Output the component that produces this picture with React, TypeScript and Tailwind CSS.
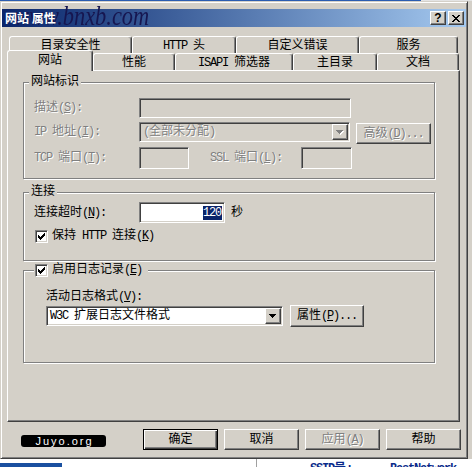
import React from "react";

const FONT = "font-['Liberation_Mono','Noto_Sans_CJK_SC',monospace] text-[12px] leading-[14px]";
const raised =
  "bg-[#d4d0c8] border border-t-white border-l-white border-r-[#404040] border-b-[#404040] shadow-[inset_-1px_-1px_0_#808080]";
const sunken =
  "border border-t-[#808080] border-l-[#808080] border-r-white border-b-white shadow-[inset_1px_1px_0_#404040,inset_-1px_-1px_0_#d4d0c8]";
const etched = "border border-[#808080] shadow-[inset_1px_1px_0_#fff,1px_1px_0_#fff]";
const dim = "text-[#808080] [text-shadow:1px_1px_0_#fff]";

// "&X" underlines X; latin runs get a half-width cell like the old bitmap font
function T({ s }: { s: string }) {
  const parts = s.split(/([\u3000-\u9fff\uff00-\uffef]+)/).filter(Boolean);
  return (
    <span className="whitespace-pre">
      {parts.map((p, i) => {
        if (/[\u3000-\u9fff\uff00-\uffef]/.test(p)) return <React.Fragment key={i}>{p}</React.Fragment>;
        const bits = p.split(/&(.)/);
        return (
          <span key={i} className="tracking-[-1.2px]">
            {bits.map((b, j) => (j % 2 ? <u key={j}>{b}</u> : b))}
          </span>
        );
      })}
    </span>
  );
}

const CHECK = ["......X", ".....XX", "X...XXX", "XX.XXX.", "XXXXX..", ".XXX...", "..X...."];

function Check() {
  return (
    <span className={`flex h-[13px] w-[13px] shrink-0 items-center justify-center bg-white ${sunken}`}>
      <svg width="7" height="7" viewBox="0 0 7 7" shapeRendering="crispEdges">
        {CHECK.map((row, y) =>
          row.split("").map((c, x) => (c === "X" ? <rect key={`${x}-${y}`} x={x} y={y} width="1" height="1" fill="#000" /> : null))
        )}
      </svg>
    </span>
  );
}

function Arrow({ disabled }: { disabled?: boolean }) {
  return (
    <span className={`flex h-[16px] w-[16px] shrink-0 items-center justify-center ${raised}`}>
      <svg width="8" height="5" viewBox="0 0 8 5" shapeRendering="crispEdges">
        {disabled && <path d="M1 1h7L4.5 5z" fill="#fff" />}
        <path d="M0 0h7L3.5 4z" fill={disabled ? "#808080" : "#000"} />
      </svg>
    </span>
  );
}

function Tab({ w, s, active }: { w: number; s: string; active?: boolean }) {
  return (
    <div
      style={{ width: w }}
      className={`flex items-start justify-center rounded-t-[3px] border-l border-t border-r border-l-white border-t-white border-r-[#404040] bg-[#d4d0c8] shadow-[inset_-1px_0_0_#808080] ${
        active ? "relative z-10 -mb-[1px] h-[21px] pt-[3px]" : "h-[17px] pt-[2px]"
      }`}
    >
      <T s={s} />
    </div>
  );
}

function Button({ s, w, h = 21, disabled, primary }: { s: string; w: number; h?: number; disabled?: boolean; primary?: boolean }) {
  return (
    <div
      style={{ width: w, height: h }}
      className={`flex shrink-0 items-center justify-center ${
        primary
          ? "border border-black bg-[#d4d0c8] shadow-[inset_1px_1px_0_#fff,inset_-1px_-1px_0_#404040,inset_-2px_-2px_0_#808080]"
          : raised
      } ${disabled ? dim : "text-black"}`}
    >
      <T s={s} />
    </div>
  );
}

export default function App() {
  return (
    <div className={`flex h-[467px] w-[472px] flex-col overflow-hidden bg-[#d4d0c8] ${FONT}`}>
      <div className="flex h-[1px]">
        <div className="w-[421px] bg-[#2a5cb0]" />
        <div className="flex-1 bg-[#e4e4e4]" />
      </div>

      {/* window */}
      <div className="flex h-[458px] w-[468px] flex-col border border-t-[#d4d0c8] border-l-[#d4d0c8] border-r-[#404040] border-b-[#404040] px-[1px] pt-[7px] shadow-[inset_1px_1px_0_#fff,inset_-1px_-1px_0_#808080]">
        <div className="relative flex h-[18px] items-center bg-gradient-to-r from-[#0a246a] to-[#a6caf0] pl-[3px] pr-[2px]">
          <span className="absolute left-[12px] -top-[10px] origin-left scale-x-[0.8] font-['Liberation_Serif',serif] text-[28px] italic leading-[34px] text-[#161650]">
            www.bnxb.com
          </span>
          <span className="relative z-10 font-['Noto_Sans_CJK_SC',sans-serif] text-[12px] font-bold text-white">网站 属性</span>
          <div className="relative z-10 ml-auto flex gap-[2px]">
            <div className={`flex h-[14px] w-[16px] items-center justify-center ${raised}`}>
              <span className="font-['Liberation_Sans',sans-serif] text-[12px] font-bold leading-[12px] text-black">?</span>
            </div>
            <div className={`flex h-[14px] w-[16px] items-center justify-center ${raised}`}>
              <svg width="8" height="7" viewBox="0 0 8 7" shapeRendering="crispEdges">
                <path d="M0 0h2l2 2.5L6 0h2L5 3.5 8 7H6L4 4.5 2 7H0l3-3.5z" fill="#000" />
              </svg>
            </div>
          </div>
        </div>

        {/* tabs */}
        <div className="ml-[7px] mt-[9px] flex">
          <Tab w={123} s="目录安全性" />
          <Tab w={104} s="HTTP 头" />
          <Tab w={123} s="自定义错误" />
          <Tab w={99} s="服务" />
        </div>
        <div className="ml-[5px] flex h-[17px] items-end">
          <Tab w={86} s="网站" active />
          <Tab w={82} s="性能" />
          <Tab w={118} s="ISAPI 筛选器" />
          <Tab w={84} s="主目录" />
          <Tab w={82} s="文档" />
        </div>

        {/* page */}
        <div className="ml-[5px] flex h-[352px] w-[453px] flex-col border border-t-white border-l-white border-r-[#404040] border-b-[#404040] shadow-[inset_-1px_-1px_0_#808080]">
          <div className={`relative ml-[15px] mt-[11px] flex h-[97px] w-[412px] flex-col pl-[10px] ${etched}`}>
            <span className="absolute -top-[8px] left-[5px] bg-[#d4d0c8] px-[2px]">网站标识</span>
            <div className="mt-[15px] flex h-[20px] items-center">
              <span className={`w-[105px] ${dim}`}>
                <T s="描述(&S):" />
              </span>
              <div className={`h-[20px] w-[212px] ${sunken}`} />
            </div>
            <div className="mt-[4px] flex h-[22px] items-start">
              <span className={`flex h-[20px] w-[105px] items-center ${dim}`}>
                <T s="IP 地址(&I):" />
              </span>
              <div className={`flex h-[20px] w-[211px] items-center p-[1px] ${sunken}`}>
                <span className={`flex-1 pl-[2px] ${dim}`}>
                  <T s="(全部未分配)" />
                </span>
                <Arrow disabled />
              </div>
              <div className="ml-[6px] mt-[1px]">
                <Button w={75} s="高级(&D)..." disabled />
              </div>
            </div>
            <div className="mt-[3px] flex h-[22px] items-center">
              <span className={`w-[105px] ${dim}`}>
                <T s="TCP 端口(&T):" />
              </span>
              <div className={`h-[22px] w-[50px] ${sunken}`} />
              <span className={`ml-[21px] w-[91px] ${dim}`}>
                <T s="SSL 端口(&L):" />
              </span>
              <div className={`h-[22px] w-[51px] ${sunken}`} />
            </div>
          </div>

          <div className={`relative ml-[15px] mt-[13px] flex h-[69px] w-[412px] flex-col pl-[10px] ${etched}`}>
            <span className="absolute -top-[8px] left-[5px] bg-[#d4d0c8] px-[2px]">连接</span>
            <div className="mt-[9px] flex h-[21px] items-center">
              <span className="w-[105px]">
                <T s="连接超时(&N):" />
              </span>
              <div className={`flex h-[21px] w-[86px] items-center justify-end bg-white pr-[2px] ${sunken}`}>
                <span className="bg-[#0a246a] pr-[1px] text-white">
                  <T s="120" />
                </span>
              </div>
              <span className="ml-[6px]">秒</span>
            </div>
            <div className="ml-[1px] mt-[6px] flex items-center gap-[4px]">
              <Check />
              <T s="保持 HTTP 连接(&K)" />
            </div>
          </div>

          <div className={`relative ml-[15px] mt-[9px] flex h-[93px] w-[412px] flex-col pl-[22px] ${etched}`}>
            <div className="absolute -top-[8px] left-[10px] flex h-[14px] items-center gap-[4px] bg-[#d4d0c8] pl-[1px] pr-[6px]">
              <Check />
              <T s="启用日志记录(&E)" />
            </div>
            <span className="mt-[19px]">
              <T s="活动日志格式(&V):" />
            </span>
            <div className="mt-[1px] flex items-start">
              <div className={`mt-[1px] flex h-[20px] w-[237px] items-center bg-white p-[1px] ${sunken}`}>
                <span className="flex-1 pl-[2px]">
                  <T s="W3C 扩展日志文件格式" />
                </span>
                <Arrow />
              </div>
              <div className="ml-[7px]">
                <Button w={74} h={22} s="属性(&P)..." />
              </div>
            </div>
          </div>
        </div>

        {/* footer */}
        <div className="mt-[7px] flex h-[21px] items-center">
          <div className="ml-[19px] mt-[3px] flex h-[12px] w-[85px] items-center justify-center rounded-[3px] bg-black pl-[2px] font-['Liberation_Sans',sans-serif] text-[11px] tracking-[2px] text-white">
            Juyo.org
          </div>
          <div className="ml-[37px] flex gap-[6px]">
            <Button w={75} s="确定" primary />
            <Button w={75} s="取消" />
            <Button w={75} s="应用(&A)" disabled />
            <Button w={75} s="帮助" />
          </div>
        </div>
      </div>

      {/* what shows below the dialog */}
      <div className="flex h-[8px] bg-white">
        <div className="h-[4px] w-[62px] self-end bg-[#1a50a0]" />
        <div className="ml-[194px] h-full w-[1px] bg-[#a0a0a0]" />
        <span className="ml-[53px] mt-[3px] font-bold text-[#0a2a8a]">
          <T s="SSID号:" />
        </span>
        <span className="ml-[38px] mt-[3px] font-bold text-[#0a2a8a]">
          <T s="BestNetwork" />
        </span>
      </div>
    </div>
  );
}
